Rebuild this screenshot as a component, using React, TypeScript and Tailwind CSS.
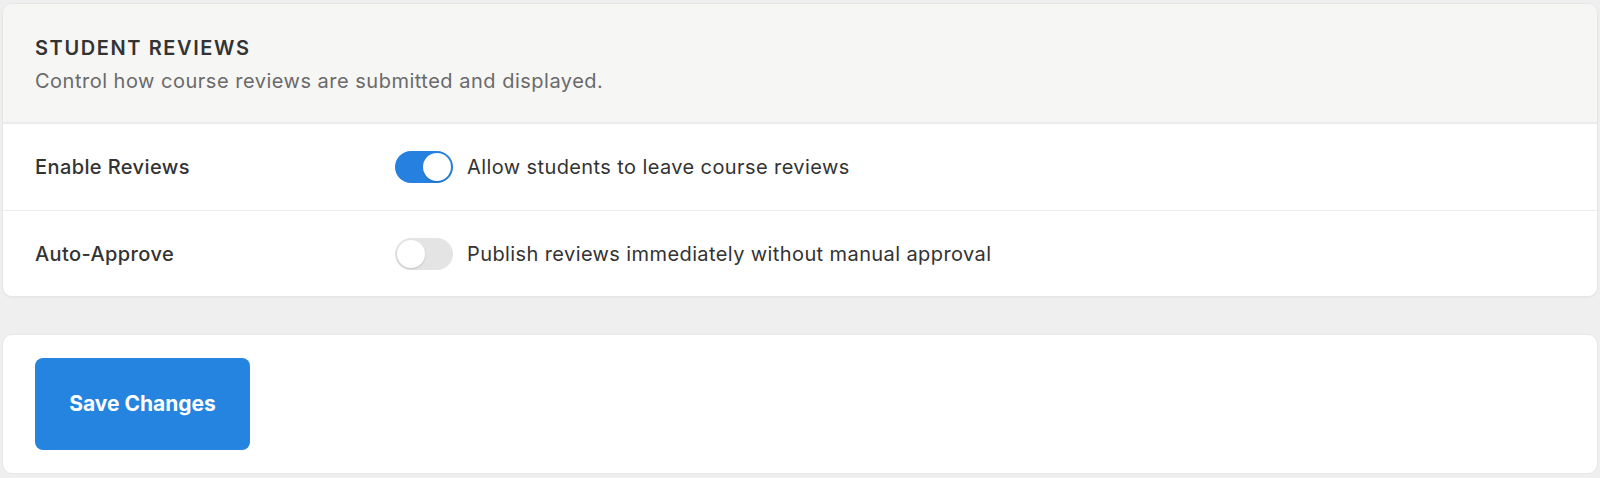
import { useState } from "react";

function Toggle({ on, onChange }: { on: boolean; onChange: () => void }) {
  return (
    <button
      type="button"
      onClick={onChange}
      className={`flex h-[32px] w-[58px] shrink-0 items-center rounded-full p-[2px] transition-colors ${
        on ? "justify-end bg-[#2680df]" : "justify-start bg-[#e4e4e4]"
      }`}
    >
      <span className="h-[28px] w-[28px] rounded-full bg-white shadow-[0_1px_2px_rgba(0,0,0,0.15)]" />
    </button>
  );
}

const settings = [
  { label: "Enable Reviews", text: "Allow students to leave course reviews", on: true },
  { label: "Auto-Approve", text: "Publish reviews immediately without manual approval", on: false },
];

export default function App() {
  const [values, setValues] = useState(settings.map((s) => s.on));

  return (
    <div className="min-h-screen bg-[#efefef] px-[2px] pt-[3px] font-['Inter',sans-serif] text-[#333]">
      <div className="overflow-hidden rounded-[10px] border border-[#e7e7e7] bg-white shadow-[0_1px_2px_rgba(0,0,0,0.04)]">
        <div className="border-b-2 border-[#ebebeb] bg-[#f6f6f5] px-[32px] pb-[28px] pt-[32px]">
          <h2 className="text-[20px] font-semibold leading-[25px] tracking-[0.08em] text-[#333]">STUDENT REVIEWS</h2>
          <p className="mt-[8px] text-[20px] leading-[25px] tracking-[0.025em] text-[#6a6a6a]">
            Control how course reviews are submitted and displayed.
          </p>
        </div>
        {settings.map((s, i) => (
          <div
            key={s.label}
            className={`flex h-[86px] items-center px-[32px] ${i > 0 ? "border-t border-[#ececec]" : ""}`}
          >
            <div className="w-[360px] text-[20px] font-medium tracking-[0.02em] text-[#333]">{s.label}</div>
            <Toggle
              on={values[i]}
              onChange={() => setValues((v) => v.map((x, j) => (j === i ? !x : x)))}
            />
            <span className="ml-[14px] text-[20px] tracking-[0.02em] text-[#333]">{s.text}</span>
          </div>
        ))}
      </div>
      <div className="mt-[37px] rounded-[10px] border border-[#e7e7e7] bg-white px-[32px] pb-[23px] pt-[23px]">
        <button
          type="button"
          className="h-[92px] w-[215px] rounded-[8px] bg-[#2584e0] text-[21px] font-bold text-white"
        >
          Save Changes
        </button>
      </div>
    </div>
  );
}
